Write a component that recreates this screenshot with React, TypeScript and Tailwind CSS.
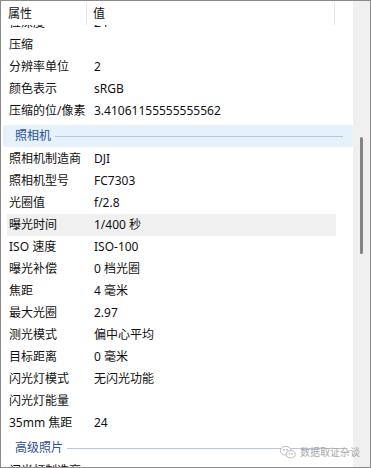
import React from 'react';

type Row = { label: string; value?: string; active?: boolean };

const imageRows: Row[] = [
  { label: '位深度', value: '24' },
  { label: '压缩' },
  { label: '分辨率单位', value: '2' },
  { label: '颜色表示', value: 'sRGB' },
  { label: '压缩的位/像素', value: '3.41061155555555562' },
];

const cameraRows: Row[] = [
  { label: '照相机制造商', value: 'DJI' },
  { label: '照相机型号', value: 'FC7303' },
  { label: '光圈值', value: 'f/2.8' },
  { label: '曝光时间', value: '1/400 秒', active: true },
  { label: 'ISO 速度', value: 'ISO-100' },
  { label: '曝光补偿', value: '0 档光圈' },
  { label: '焦距', value: '4 毫米' },
  { label: '最大光圈', value: '2.97' },
  { label: '测光模式', value: '偏中心平均' },
  { label: '目标距离', value: '0 毫米' },
  { label: '闪光灯模式', value: '无闪光功能' },
  { label: '闪光灯能量' },
  { label: '35mm 焦距', value: '24' },
];

function PropRow({ row }: { row: Row }) {
  return (
    <div
      className={`flex h-[22px] items-center ml-[6px] w-[329px] shrink-0 ${row.active ? 'bg-[#f0f0f0]' : ''}`}
    >
      <span className="w-[87px] pl-[2px] whitespace-nowrap">{row.label}</span>
      <span className="whitespace-nowrap">{row.value}</span>
    </div>
  );
}

function Group({ title, selected }: { title: string; selected?: boolean }) {
  return (
    <div className="h-[26px] pt-[3px] pb-[1px] shrink-0">
      <div
        className={`flex h-[22px] items-center ml-[2px] w-[350px] rounded-[3px] pl-[12px] pr-[10px] ${selected ? 'bg-[#e5f1fb]' : ''}`}
      >
        <span className="text-[#2b4f97] whitespace-nowrap">{title}</span>
        <div className="ml-[4px] flex-1 h-px bg-[#b8c8dc]" />
      </div>
    </div>
  );
}

function WeChatMark() {
  return (
    <svg width="18" height="15" viewBox="0 0 20 16" fill="none" stroke="#b5b5b5" strokeWidth="1">
      <ellipse cx="7.5" cy="6" rx="6" ry="4.8" fill="white" />
      <ellipse cx="13" cy="10" rx="5" ry="4" fill="white" />
      <circle cx="5.5" cy="5" r="0.6" fill="#b5b5b5" />
      <circle cx="9" cy="5" r="0.6" fill="#b5b5b5" />
      <circle cx="11.5" cy="9.5" r="0.5" fill="#b5b5b5" />
      <circle cx="14.5" cy="9.5" r="0.5" fill="#b5b5b5" />
    </svg>
  );
}

export default function App() {
  return (
    <div
      className="relative w-[371px] h-[468px] bg-white border border-[#8a8a8a] overflow-hidden text-[12px] text-[#111]"
      style={{ fontFamily: '"Noto Sans", "Noto Sans CJK SC", sans-serif' }}
    >
      <div className="flex h-full">
        <div className="flex flex-col w-[352px]">
          {/* column header */}
          <div className="relative z-10 flex h-[24px] shrink-0 items-center bg-white">
            <span className="w-[85px] pl-[7px] pt-[2px]">属性</span>
            <div className="w-px h-[23px] bg-[#e3e3e3] self-start mt-[1px]" />
            <span className="pl-[6px] pt-[2px] flex-1">值</span>
            <div className="w-px h-[23px] bg-[#e3e3e3] self-start mt-[1px] mr-[18px]" />
          </div>
          <div className="flex flex-col overflow-hidden">
            <div className="-mt-[13px] flex flex-col">
              {imageRows.map((r) => (
                <PropRow key={r.label} row={r} />
              ))}
              <Group title="照相机" selected />
              {cameraRows.map((r) => (
                <PropRow key={r.label} row={r} />
              ))}
              <Group title="高级照片" />
              <PropRow row={{ label: '闪光灯制造商' }} />
            </div>
          </div>
        </div>
        {/* scrollbar */}
        <div className="w-[17px] h-full bg-[#f0f0f0] flex justify-center">
          <div className="mt-[136px] w-[3px] h-[117px] rounded-full bg-[#858585]" />
        </div>
      </div>

      {/* watermark */}
      <div className="absolute left-[278px] top-[444px] flex items-center gap-[3px] text-[#a8a8a8] text-[10px] whitespace-nowrap">
        <WeChatMark />
        <span>数据取证杂谈</span>
      </div>
    </div>
  );
}
